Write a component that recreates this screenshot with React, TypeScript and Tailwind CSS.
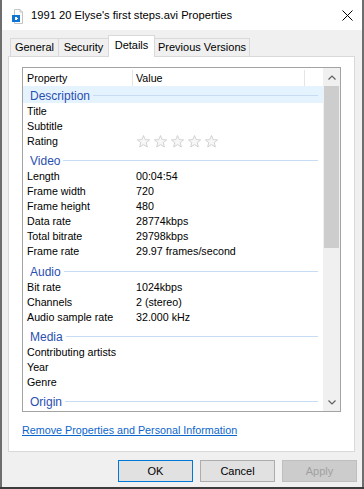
import { useState } from "react";

type Row = { label: string; value?: string; stars?: boolean };
type Group = { name: string; rows: Row[]; h: string };

const groups: Group[] = [
    {
        name: "Description",
        h: "h-[17px] pt-[2px]",
        rows: [{ label: "Title" }, { label: "Subtitle" }, { label: "Rating", stars: true }],
    },
    {
        name: "Video",
        h: "h-[20px] pt-[5px]",
        rows: [
            { label: "Length", value: "00:04:54" },
            { label: "Frame width", value: "720" },
            { label: "Frame height", value: "480" },
            { label: "Data rate", value: "28774kbps" },
            { label: "Total bitrate", value: "29798kbps" },
            { label: "Frame rate", value: "29.97 frames/second" },
        ],
    },
    {
        name: "Audio",
        h: "h-[21px] pt-[6px]",
        rows: [
            { label: "Bit rate", value: "1024kbps" },
            { label: "Channels", value: "2 (stereo)" },
            { label: "Audio sample rate", value: "32.000 kHz" },
        ],
    },
    {
        name: "Media",
        h: "h-[20px] pt-[5px]",
        rows: [{ label: "Contributing artists" }, { label: "Year" }, { label: "Genre" }],
    },
    { name: "Origin", h: "h-[20px] pt-[5px]", rows: [] },
];

function FileIcon() {
    return (
        <svg width="12" height="15" viewBox="0 0 12 15">
            <path d="M2.5 0.5 H8 L10.5 3 V14.5 H2.5 Z" fill="#fff" stroke="#c4c4c4" />
            <path d="M8 0.5 V3 H10.5" fill="none" stroke="#c4c4c4" />
            <rect x="0" y="6" width="8" height="7" fill="#1173d4" />
            <rect x="3" y="8" width="2" height="3" fill="#fff" />
            <rect x="5" y="9" width="1" height="1" fill="#fff" />
        </svg>
    );
}

function Star() {
    return (
        <svg width="15" height="15" viewBox="0 0 24 24">
            <path
                d="M12 2.5 L14.8 9 L21.8 9.4 L16.4 13.9 L18.1 20.8 L12 17 L5.9 20.8 L7.6 13.9 L2.2 9.4 L9.2 9 Z"
                fill="#f7f7f7"
                stroke="#c9c9c9"
                strokeWidth="1.3"
                strokeLinejoin="round"
            />
        </svg>
    );
}

function Chevron({ up }: { up?: boolean }) {
    return (
        <svg width="8" height="5" viewBox="0 0 8 5">
            <path
                d={up ? "M0.5 4.5 L4 1 L7.5 4.5" : "M0.5 0.5 L4 4 L7.5 0.5"}
                fill="none"
                stroke="#606060"
                strokeWidth="1.2"
            />
        </svg>
    );
}

export default function App() {
    const [tab] = useState("Details");
    const tabs = [
        { name: "General", w: "w-[49px]" },
        { name: "Security", w: "w-[51px]" },
        { name: "Details", w: "w-[47px]" },
        { name: "Previous Versions", w: "w-[96px]" },
    ];

    return (
        <div
            className="w-[364px] h-[489px] bg-[#3c3c3c] text-black overflow-hidden"
            style={{ fontFamily: '"Liberation Sans", Arial, sans-serif' }}
        >
            <div className="w-[364px] h-[487px] border-l-2 border-r-2 border-[#6e6e6e] flex flex-col">
                {/* title bar */}
                <div className="h-[30px] bg-white flex items-center">
                    <div className="ml-[10px] mt-[2px]">
                        <FileIcon />
                    </div>
                    <span className="ml-[7px] mt-[1px] text-[11.2px]">1991 20 Elyse's first steps.avi Properties</span>
                    <svg className="ml-auto mr-[9px]" width="11" height="11" viewBox="0 0 11 11">
                        <path d="M0.5 0.5 L10.5 10.5 M10.5 0.5 L0.5 10.5" stroke="#000" strokeWidth="1" />
                    </svg>
                </div>

                {/* body */}
                <div className="flex-1 bg-[#f0f0f0] flex flex-col">
                    <div className="flex items-end h-[26px] pl-[8px] relative z-10">
                        {tabs.map((t) => {
                            const active = t.name === tab;
                            return (
                                <div
                                    key={t.name}
                                    className={`${t.w} flex items-center justify-center text-[11px] border border-b-0 border-[#d9d9d9] -ml-px first:ml-0 ${
                                        active
                                            ? "h-[22px] bg-white -mb-px pb-[3px]"
                                            : "h-[18px] bg-[#f0f0f0]"
                                    }`}
                                >
                                    {t.name}
                                </div>
                            );
                        })}
                    </div>

                    <div className="ml-[6px] w-[347px] h-[396px] bg-white border border-[#d9d9d9] pt-[10px] pl-[13px] flex flex-col">
                        {/* list */}
                        <div className="w-[319px] h-[345px] border border-[#a3a3a3] flex">
                            <div className="w-[300px] flex flex-col overflow-hidden">
                                <div className="h-[18px] pt-[2px] flex text-[10.7px] shrink-0">
                                    <div className="w-[110px] border-r border-[#e5e5e5] pl-[4px] flex items-center">
                                        Property
                                    </div>
                                    <div className="w-[172px] border-r border-[#e5e5e5] pl-[3px] flex items-center">
                                        Value
                                    </div>
                                </div>
                                {groups.map((g, gi) => (
                                    <div key={g.name}>
                                        <div className={`${g.h} flex ${gi === 0 ? "bg-[#e5f3ff]" : ""}`}>
                                            <div className="flex items-center w-full pl-[7px] pr-[5px]">
                                                <span className="text-[12px] text-[#2a4fb0] leading-none">
                                                    {g.name}
                                                </span>
                                                <div className="flex-1 ml-[3px] h-px bg-[#c7dcf3]" />
                                            </div>
                                        </div>
                                        {g.rows.map((r) => (
                                            <div key={r.label} className="h-[15px] pt-[2px] flex items-center text-[10.7px]">
                                                <div className="w-[110px] pl-[4px]">{r.label}</div>
                                                <div className="pl-[3px] flex">
                                                    {r.stars ? (
                                                        <div className="flex gap-[2px]">
                                                            <Star />
                                                            <Star />
                                                            <Star />
                                                            <Star />
                                                            <Star />
                                                        </div>
                                                    ) : (
                                                        r.value
                                                    )}
                                                </div>
                                            </div>
                                        ))}
                                    </div>
                                ))}
                            </div>
                            <div className="w-[17px] bg-[#f0f0f0] flex flex-col">
                                <div className="h-[18px] flex items-center justify-center">
                                    <Chevron up />
                                </div>
                                <div className="h-[162px] mx-[1px] bg-[#cdcdcd]" />
                                <div className="flex-1" />
                                <div className="h-[17px] flex items-center justify-center">
                                    <Chevron />
                                </div>
                            </div>
                        </div>

                        <a className="mt-[10px] text-[10.75px] text-[#0b66cc] underline w-fit">
                            Remove Properties and Personal Information
                        </a>
                    </div>

                    {/* buttons */}
                    <div className="flex justify-end gap-[7px] pr-[5px] mt-[8px] text-[11px]">
                        <button className="w-[75px] h-[22px] bg-[#e1e1e1] border border-[#0078d7]">OK</button>
                        <button className="w-[75px] h-[22px] bg-[#e1e1e1] border border-[#adadad]">Cancel</button>
                        <button className="w-[75px] h-[22px] bg-[#cccccc] border border-[#bfbfbf] text-[#a0a0a0]">
                            Apply
                        </button>
                    </div>
                </div>
            </div>
        </div>
    );
}
